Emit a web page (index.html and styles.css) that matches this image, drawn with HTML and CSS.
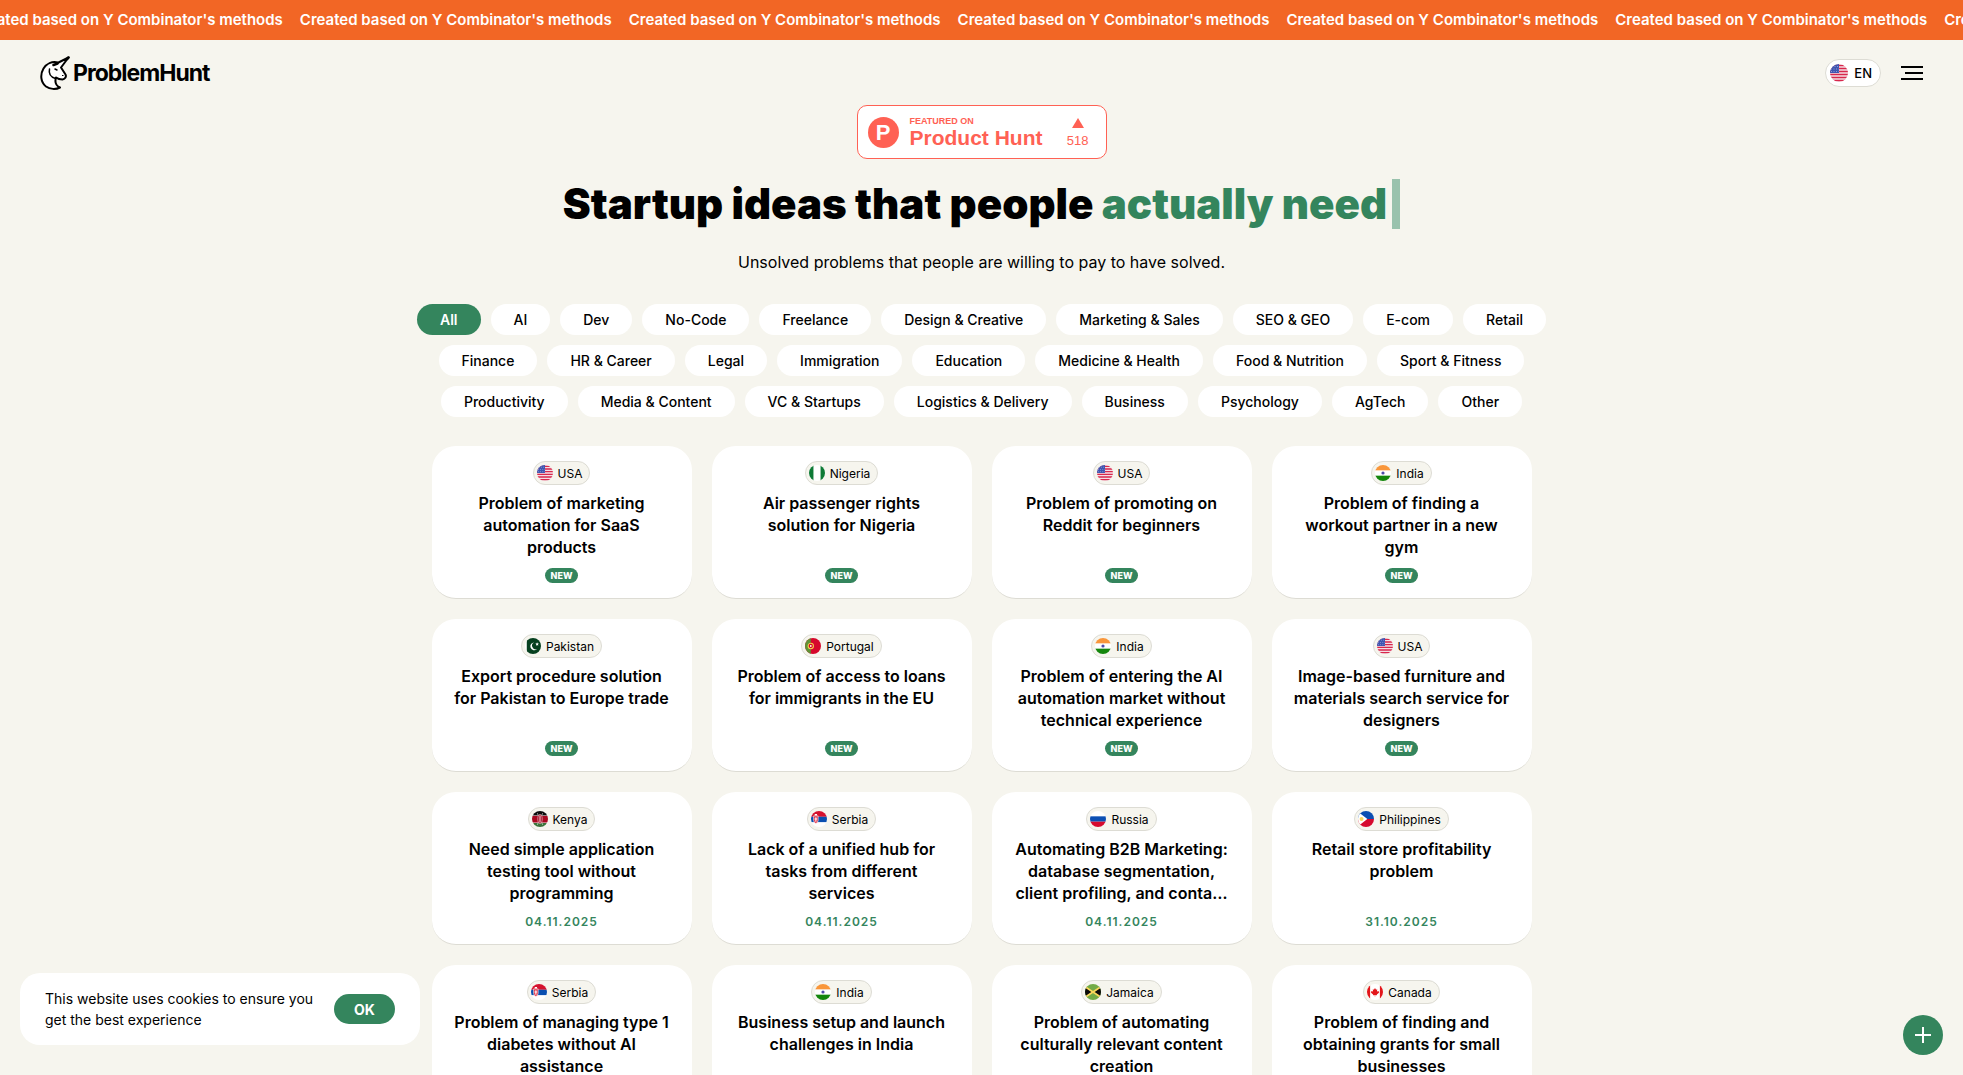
FILE: index.html
```html
<!DOCTYPE html>
<html lang="en">
<head>
  <meta charset="UTF-8" />
  <meta name="viewport" content="width=device-width, initial-scale=1.0" />
  <title>ProblemHunt</title>
  <link rel="stylesheet" href="styles.css">
</head>
<body>
  <!-- Flags, reused by every country tag -->
  <svg class="sprite" aria-hidden="true">
    <clipPath id="round"><circle cx="9" cy="9" r="9" /></clipPath>
    <symbol id="usa" viewBox="0 0 18 18">
      <g clip-path="url(#round)">
        <rect width="18" height="18" fill="#f4dfe4" />
        <path d="M0 1.5h18M0 4.5h18M0 7.5h18M0 10.5h18M0 13.5h18M0 16.5h18" stroke="#d8274c" stroke-width="1.5" />
        <rect width="9" height="9" fill="#3f55b0" />
        <path d="M2 2.5h7M1 5h8M1 7.5h8" stroke="#8f9cd6" stroke-width="1" stroke-dasharray="1 1.5" />
      </g>
    </symbol>
    <symbol id="nigeria" viewBox="0 0 18 18">
      <g clip-path="url(#round)">
        <rect width="18" height="18" fill="#fff" />
        <path d="M0 0h5v18H0zM13 0h5v18h-5z" fill="#0d7a35" />
      </g>
    </symbol>
    <symbol id="india" viewBox="0 0 18 18">
      <g clip-path="url(#round)">
        <rect width="18" height="18" fill="#fff" />
        <rect width="18" height="6" fill="#f9963a" />
        <rect y="12" width="18" height="6" fill="#14860c" />
        <circle cx="9" cy="9" r="1.8" fill="#4c4ba8" />
      </g>
    </symbol>
    <symbol id="pakistan" viewBox="0 0 18 18">
      <g clip-path="url(#round)">
        <rect width="18" height="18" fill="#fff" />
        <rect x="2" width="16" height="18" fill="#06401f" />
        <path d="M13.5 12.5a4.4 4.4 0 1 1-3-7.5 3.7 3.7 0 1 0 3 7.5z" fill="#fff" />
        <path d="M13.6 4.8l.6 1.3 1.4.1-1 1 .3 1.4-1.3-.7-1.2.7.3-1.400-1-1 1.3-.1z" fill="#fff" />
      </g>
    </symbol>
    <symbol id="portugal" viewBox="0 0 18 18">
      <g clip-path="url(#round)">
        <rect width="18" height="18" fill="#d6082c" />
        <rect width="6.5" height="18" fill="#5f9336" />
        <circle cx="6.5" cy="9" r="3" fill="#d6082c" stroke="#f5cf4a" stroke-width="1.2" />
        <circle cx="6.5" cy="9" r="1" fill="#fff" />
      </g>
    </symbol>
    <symbol id="kenya" viewBox="0 0 18 18">
      <g clip-path="url(#round)">
        <rect width="18" height="18" fill="#fff" />
        <rect width="18" height="5" fill="#0b0b0b" />
        <rect y="5.5" width="18" height="7.5" fill="#a8071f" />
        <rect y="13.5" width="18" height="5" fill="#3a7238" />
        <path d="M6 2.5l6 13M12 2.5l-6 13" stroke="#fff" stroke-width=".7" />
        <ellipse cx="9" cy="9" rx="2.5" ry="5" fill="#a8071f" stroke="#e9c9cc" stroke-width=".7" />
        <path d="M9 5v8" stroke="#fff" stroke-width="1" />
      </g>
    </symbol>
    <symbol id="serbia" viewBox="0 0 18 18">
      <g clip-path="url(#round)">
        <rect width="18" height="18" fill="#fff" />
        <rect width="18" height="6.5" fill="#d5122e" />
        <rect y="6.5" width="18" height="6" fill="#0a4fb0" />
        <path d="M3 5.5h5v5q0 2.5-2.5 3.5Q3 13 3 10.5z" fill="#e02a40" stroke="#fff" stroke-width=".7" />
        <path d="M4.2 3.5h2.6v1.6H4.2z" fill="#fff" />
        <path d="M5.5 7v5M4 9h3" stroke="#fff" stroke-width="1.2" />
      </g>
    </symbol>
    <symbol id="russia" viewBox="0 0 18 18">
      <g clip-path="url(#round)">
        <rect width="18" height="18" fill="#fff" />
        <rect y="6" width="18" height="6" fill="#0b4fb3" />
        <rect y="12" width="18" height="6" fill="#d60a2e" />
      </g>
    </symbol>
    <symbol id="philippines" viewBox="0 0 18 18">
      <g clip-path="url(#round)">
        <rect width="18" height="9" fill="#0b4fb3" />
        <rect y="9" width="18" height="9" fill="#d60a2e" />
        <path d="M0 0l1.5 2L10.5 9l-9 7L0 18z" fill="#fff" />
        <circle cx="4" cy="9" r="2.2" fill="#fbd75b" />
      </g>
    </symbol>
    <symbol id="jamaica" viewBox="0 0 18 18">
      <g clip-path="url(#round)">
        <rect width="18" height="18" fill="#73ab46" />
        <path d="M0 3l7.5 6L0 15zM18 3l-7.5 6 7.5 6z" fill="#0b0b0b" />
        <path d="M0 3l18 12M18 3L0 15" stroke="#fbd75b" stroke-width="2" />
      </g>
    </symbol>
    <symbol id="canada" viewBox="0 0 18 18">
      <g clip-path="url(#round)">
        <rect width="18" height="18" fill="#fff" />
        <path d="M0 0h3.5v18H0zM14.5 0H18v18h-3.5z" fill="#e3151a" />
        <path d="M9 4.5l1.2 2 1.3-.6-.3 2.5 2.3-.6-.5 1.3.8.6-2.7 2 .1 1-1.9-.3v1.6h-.6v-1.6l-1.9.3.1-1-2.7-2 .8-.6-.5-1.3 2.3.6-.3-2.500 1.3.6z" fill="#e3151a" />
      </g>
    </symbol>
  </svg>

  <div class="ticker">
    <div class="ticker-track">
      <span>Created based on Y Combinator's methods</span>
      <span>Created based on Y Combinator's methods</span>
      <span>Created based on Y Combinator's methods</span>
      <span>Created based on Y Combinator's methods</span>
      <span>Created based on Y Combinator's methods</span>
      <span>Created based on Y Combinator's methods</span>
      <span>Created based on Y Combinator's methods</span>
    </div>
  </div>

  <header class="header">
    <a href="#" class="logo">
      <svg width="30" height="34" viewBox="0 0 30 34" aria-hidden="true">
        <path d="M18 6.5C12 5 6.5 7.5 3.5 12.5C0 18.5.5 26 6 30.5C10 33.5 16 33.5 20 31.5C16.5 30 14.5 26.5 16 21.5C18 23 20 23.5 22.5 23.5C25.5 23 26.5 20.5 25.5 18.5L21 11.5L28.5 1.5L17.5 7" fill="#fff" stroke="#000" stroke-width="2" stroke-linejoin="round" stroke-linecap="round" />
        <path d="M27 3l1.5-1.5M17.5 7.5l-4 1.5" stroke="#000" stroke-width="2.5" stroke-linecap="round" />
        <path d="M9.5 13c-1 4.5 1 8 6 9.5" fill="none" stroke="#000" stroke-width="1.5" stroke-linecap="round" />
        <path d="M15 13l2 1" stroke="#000" stroke-width="1.5" stroke-linecap="round" />
        <path d="M22 19.5h1.5" stroke="#000" stroke-width="1" />
      </svg>
      <span>ProblemHunt</span>
    </a>
    <div class="header-right">
      <button type="button" class="lang">
        <svg width="18" height="18" aria-hidden="true"><use href="#usa" /></svg>
        EN
      </button>
      <button type="button" class="menu-btn" aria-label="Menu">
        <span></span>
        <span></span>
        <span></span>
      </button>
    </div>
  </header>

  <main>
    <a href="#" class="ph-badge">
      <span class="ph-logo">P</span>
      <span class="ph-text">
        <small>FEATURED ON</small>
        <strong>Product Hunt</strong>
      </span>
      <span class="ph-votes">
        <svg width="12" height="10" viewBox="0 0 12 10" aria-hidden="true"><path d="M6 0l6 10H0z" fill="#ff6154" /></svg>
        518
      </span>
    </a>

    <h1>Startup ideas that people <span>actually need</span><i class="caret"></i></h1>
    <p class="subtitle">Unsolved problems that people are willing to pay to have solved.</p>

    <nav class="filters">
      <button type="button" class="active">All</button>
      <button type="button">AI</button>
      <button type="button">Dev</button>
      <button type="button">No-Code</button>
      <button type="button">Freelance</button>
      <button type="button">Design &amp; Creative</button>
      <button type="button">Marketing &amp; Sales</button>
      <button type="button">SEO &amp; GEO</button>
      <button type="button">E-com</button>
      <button type="button">Retail</button>
      <button type="button">Finance</button>
      <button type="button">HR &amp; Career</button>
      <button type="button">Legal</button>
      <button type="button">Immigration</button>
      <button type="button">Education</button>
      <button type="button">Medicine &amp; Health</button>
      <button type="button">Food &amp; Nutrition</button>
      <button type="button">Sport &amp; Fitness</button>
      <button type="button">Productivity</button>
      <button type="button">Media &amp; Content</button>
      <button type="button">VC &amp; Startups</button>
      <button type="button">Logistics &amp; Delivery</button>
      <button type="button">Business</button>
      <button type="button">Psychology</button>
      <button type="button">AgTech</button>
      <button type="button">Other</button>
    </nav>

    <section class="cards">
      <a href="#" class="card">
        <span class="country"><svg width="16" height="16"><use href="#usa" /></svg>USA</span>
        <h2>Problem of marketing automation for SaaS products</h2>
        <span class="new">NEW</span>
      </a>
      <a href="#" class="card">
        <span class="country"><svg width="16" height="16"><use href="#nigeria" /></svg>Nigeria</span>
        <h2>Air passenger rights solution for Nigeria</h2>
        <span class="new">NEW</span>
      </a>
      <a href="#" class="card">
        <span class="country"><svg width="16" height="16"><use href="#usa" /></svg>USA</span>
        <h2>Problem of promoting on Reddit for beginners</h2>
        <span class="new">NEW</span>
      </a>
      <a href="#" class="card">
        <span class="country"><svg width="16" height="16"><use href="#india" /></svg>India</span>
        <h2>Problem of finding a workout partner in a new gym</h2>
        <span class="new">NEW</span>
      </a>

      <a href="#" class="card">
        <span class="country"><svg width="16" height="16"><use href="#pakistan" /></svg>Pakistan</span>
        <h2>Export procedure solution for Pakistan to Europe trade</h2>
        <span class="new">NEW</span>
      </a>
      <a href="#" class="card">
        <span class="country"><svg width="16" height="16"><use href="#portugal" /></svg>Portugal</span>
        <h2>Problem of access to loans for immigrants in the EU</h2>
        <span class="new">NEW</span>
      </a>
      <a href="#" class="card">
        <span class="country"><svg width="16" height="16"><use href="#india" /></svg>India</span>
        <h2>Problem of entering the AI automation market without technical experience</h2>
        <span class="new">NEW</span>
      </a>
      <a href="#" class="card">
        <span class="country"><svg width="16" height="16"><use href="#usa" /></svg>USA</span>
        <h2>Image-based furniture and materials search service for designers</h2>
        <span class="new">NEW</span>
      </a>

      <a href="#" class="card">
        <span class="country"><svg width="16" height="16"><use href="#kenya" /></svg>Kenya</span>
        <h2>Need simple application testing tool without programming</h2>
        <time>04.11.2025</time>
      </a>
      <a href="#" class="card">
        <span class="country"><svg width="16" height="16"><use href="#serbia" /></svg>Serbia</span>
        <h2>Lack of a unified hub for tasks from different services</h2>
        <time>04.11.2025</time>
      </a>
      <a href="#" class="card">
        <span class="country"><svg width="16" height="16"><use href="#russia" /></svg>Russia</span>
        <h2>Automating B2B Marketing: database segmentation, client profiling, and conta…</h2>
        <time>04.11.2025</time>
      </a>
      <a href="#" class="card">
        <span class="country"><svg width="16" height="16"><use href="#philippines" /></svg>Philippines</span>
        <h2>Retail store profitability problem</h2>
        <time>31.10.2025</time>
      </a>

      <a href="#" class="card">
        <span class="country"><svg width="16" height="16"><use href="#serbia" /></svg>Serbia</span>
        <h2>Problem of managing type 1 diabetes without AI assistance</h2>
      </a>
      <a href="#" class="card">
        <span class="country"><svg width="16" height="16"><use href="#india" /></svg>India</span>
        <h2>Business setup and launch challenges in India</h2>
      </a>
      <a href="#" class="card">
        <span class="country"><svg width="16" height="16"><use href="#jamaica" /></svg>Jamaica</span>
        <h2>Problem of automating culturally relevant content creation</h2>
      </a>
      <a href="#" class="card">
        <span class="country"><svg width="16" height="16"><use href="#canada" /></svg>Canada</span>
        <h2>Problem of finding and obtaining grants for small businesses</h2>
      </a>
    </section>
  </main>

  <div class="cookies">
    <p>This website uses cookies to ensure you get the best experience</p>
    <button type="button">OK</button>
  </div>

  <button type="button" class="add-btn" aria-label="Add a problem">
    <svg width="16" height="16" viewBox="0 0 16 16" aria-hidden="true"><path d="M8 0v16M0 8h16" stroke="#fff" stroke-width="2" /></svg>
  </button>
</body>
</html>
```
FILE: styles.css
```css
* {
  box-sizing: border-box;
}

html {
  scrollbar-width: none;
}

body {
  margin: 0;
  background-color: #f6f5ee;
  color: #000;
  font-family: Inter, sans-serif;
  font-size: 16px;
}

a {
  color: inherit;
  text-decoration: none;
}

button {
  border: none;
  padding: 0;
  color: inherit;
  font-family: inherit;
  cursor: pointer;
}

.sprite {
  position: absolute;
  width: 0;
  height: 0;
}

/* Orange running line */
.ticker {
  overflow: hidden;
  background-color: #f26625;
  color: #fff;
}

.ticker-track {
  display: flex;
  gap: 17px;
  margin-left: -29px;
  font-size: 15px;
  font-weight: 600;
  line-height: 40px;
  white-space: nowrap;
}

/* Header */
.header {
  display: flex;
  justify-content: space-between;
  align-items: center;
  height: 65px;
  padding: 0 40px;
}

.logo {
  display: flex;
  align-items: center;
  gap: 3px;
  font-size: 23px;
  font-weight: 700;
  letter-spacing: -1px;
}

.header-right {
  display: flex;
  align-items: center;
  gap: 20px;
}

.lang {
  display: flex;
  align-items: center;
  gap: 6px;
  height: 28px;
  padding: 0 8px 0 4px;
  border: 1px solid #dddcd4;
  border-radius: 14px;
  background-color: #fff;
  font-size: 13px;
  font-weight: 500;
}

.menu-btn {
  display: flex;
  flex-direction: column;
  align-items: flex-end;
  gap: 4px;
  width: 22px;
  background: none;
}

.menu-btn span {
  width: 100%;
  height: 2px;
  background-color: #000;
}

.menu-btn span:nth-child(2) {
  width: 18px;
}

/* Hero */
main {
  display: flex;
  flex-direction: column;
  align-items: center;
  padding: 0 20px 60px;
}

.ph-badge {
  display: flex;
  align-items: center;
  gap: 11px;
  width: 250px;
  height: 54px;
  padding: 0 17px 0 10px;
  border: 1px solid #ff6154;
  border-radius: 10px;
  background-color: #fff;
  color: #ff6154;
  font-family: "Liberation Sans", sans-serif;
}

.ph-logo {
  width: 31px;
  height: 31px;
  border-radius: 50%;
  background-color: #ff6154;
  color: #fff;
  font-size: 22px;
  font-weight: bold;
  line-height: 31px;
  text-align: center;
}

.ph-text {
  display: flex;
  flex-direction: column;
  padding-top: 2px;
}

.ph-text small {
  font-size: 9px;
  font-weight: bold;
  line-height: 10px;
}

.ph-text strong {
  font-size: 21px;
  line-height: 24px;
}

.ph-votes {
  display: flex;
  flex-direction: column;
  align-items: center;
  gap: 5px;
  margin-left: auto;
  padding-top: 2px;
  font-size: 13px;
  line-height: 16px;
}

h1 {
  display: flex;
  margin: 20px 0 23px;
  font-size: 42px;
  font-weight: 900;
  line-height: 50px;
  white-space: pre-wrap;
}

h1 span {
  color: #34855d;
}

.caret {
  width: 8px;
  margin-left: 5px;
  background-color: #99c2ad;
}

.subtitle {
  margin: 0 0 32px;
  line-height: 20px;
}

.filters {
  display: flex;
  flex-wrap: wrap;
  justify-content: center;
  gap: 10px;
  max-width: 1140px;
  margin-bottom: 29px;
}

.filters button {
  padding: 0 23px;
  border-radius: 16px;
  background-color: #fff;
  font-size: 14px;
  font-weight: 500;
  line-height: 31px;
}

.filters .active {
  background-color: #34855d;
  color: #fff;
  font-weight: 600;
}

/* Problem cards */
.cards {
  display: grid;
  grid-template-columns: repeat(4, 1fr);
  gap: 20px;
  width: 100%;
  max-width: 1100px;
}

.card {
  display: flex;
  flex-direction: column;
  align-items: center;
  min-height: 153px;
  padding: 15px 20px;
  border-bottom: 1px solid #dddcd4;
  border-radius: 24px;
  background-color: #fff;
  text-align: center;
}

.country {
  display: flex;
  align-items: center;
  gap: 5px;
  height: 24px;
  padding: 0 7px 0 3px;
  border: 1px solid #dddcd4;
  border-radius: 12px;
  background-color: #f6f5ee;
  font-size: 12px;
}

.card h2 {
  margin: 7px 0 0;
  font-size: 16px;
  font-weight: 600;
  line-height: 22px;
}

.new {
  margin-top: auto;
  padding: 0 6px;
  border-radius: 8px;
  background-color: #34855d;
  color: #fff;
  font-size: 9px;
  font-weight: 800;
  line-height: 15px;
}

time {
  margin-top: auto;
  color: #34855d;
  font-size: 12px;
  font-weight: 600;
  line-height: 15px;
  letter-spacing: 1px;
}

/* Cookie notice */
.cookies {
  position: fixed;
  left: 20px;
  bottom: 30px;
  display: flex;
  align-items: center;
  justify-content: space-between;
  gap: 20px;
  width: 400px;
  padding: 15px 25px;
  border-radius: 20px;
  background-color: #fff;
}

.cookies p {
  margin: 0;
  font-size: 14px;
  line-height: 21px;
}

.cookies button {
  flex: none;
  width: 61px;
  height: 30px;
  border-radius: 15px;
  background-color: #34855d;
  color: #fff;
  font-size: 14px;
  font-weight: 700;
}

.add-btn {
  position: fixed;
  right: 20px;
  bottom: 20px;
  display: flex;
  align-items: center;
  justify-content: center;
  width: 40px;
  height: 40px;
  border-radius: 50%;
  background-color: #34855d;
}
```
